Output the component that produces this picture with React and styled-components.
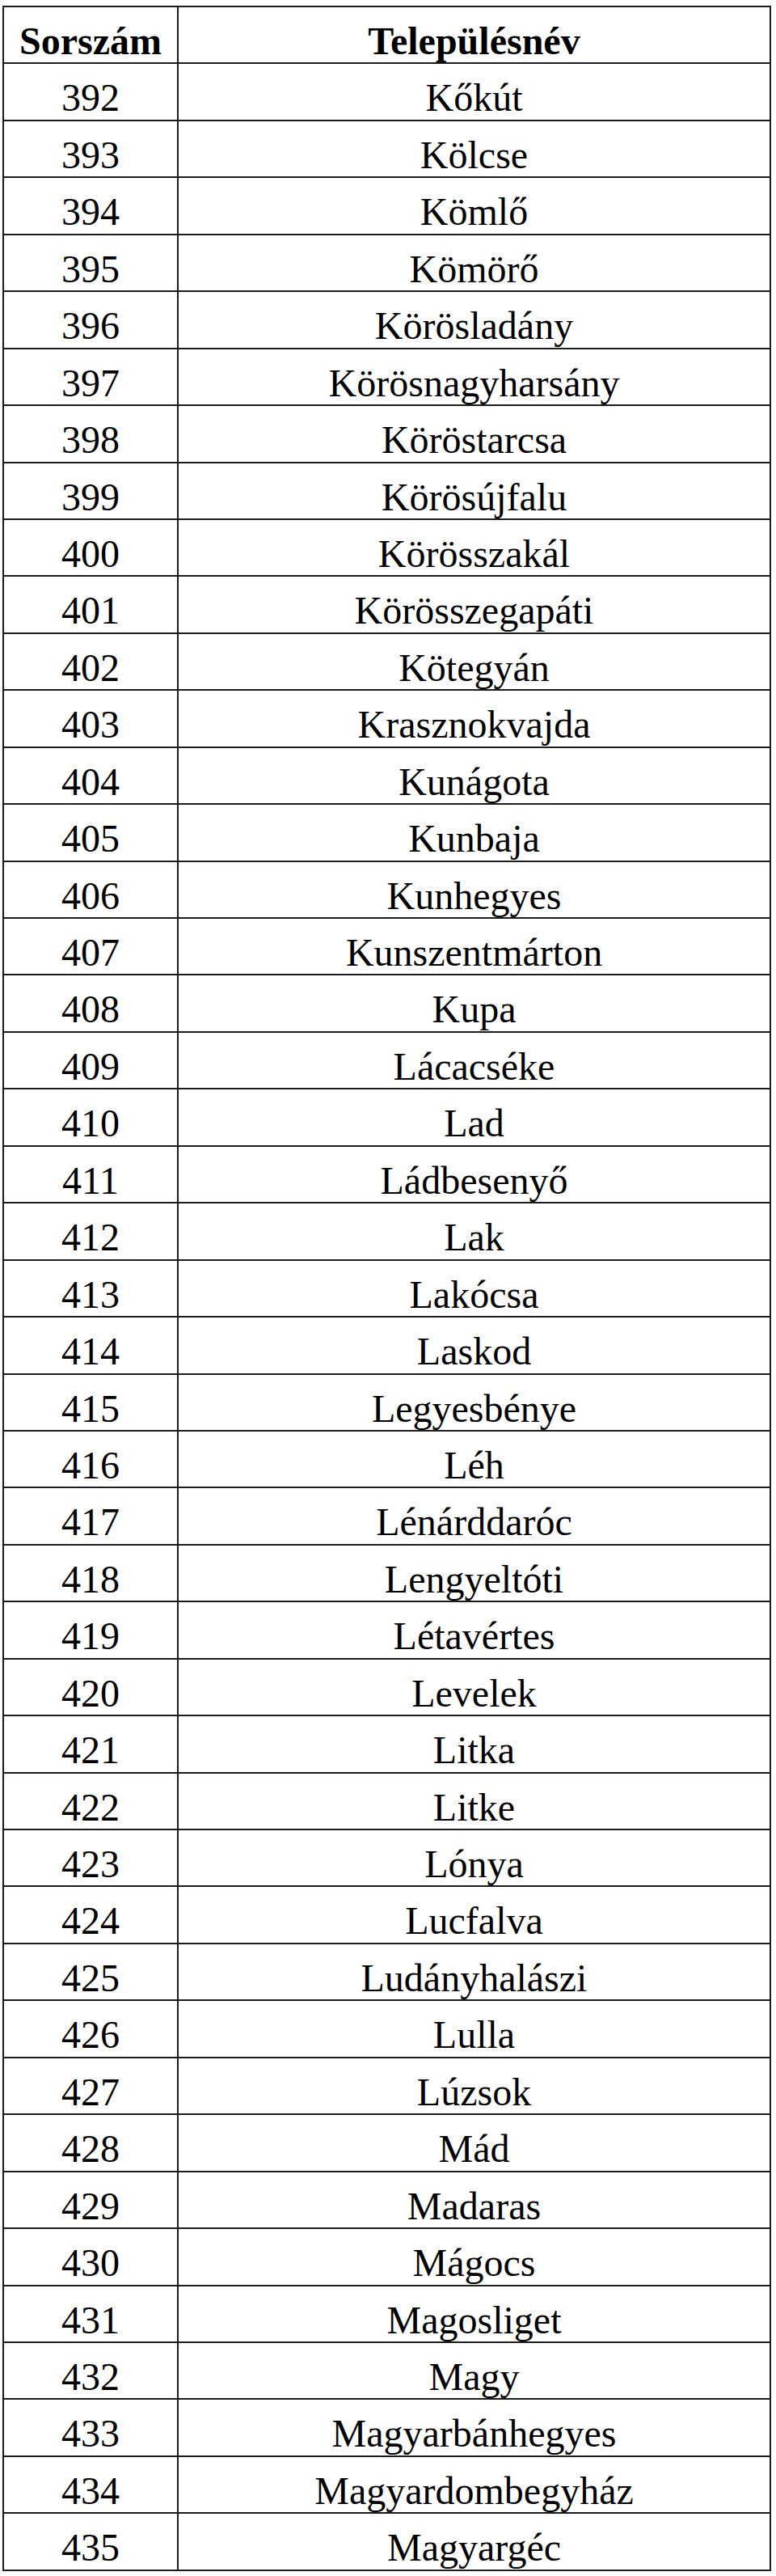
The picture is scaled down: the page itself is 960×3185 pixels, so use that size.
import React from 'react'
import styled, { createGlobalStyle } from 'styled-components'

const rows = [
  [392, 'Kőkút'],
  [393, 'Kölcse'],
  [394, 'Kömlő'],
  [395, 'Kömörő'],
  [396, 'Körösladány'],
  [397, 'Körösnagyharsány'],
  [398, 'Köröstarcsa'],
  [399, 'Körösújfalu'],
  [400, 'Körösszakál'],
  [401, 'Körösszegapáti'],
  [402, 'Kötegyán'],
  [403, 'Krasznokvajda'],
  [404, 'Kunágota'],
  [405, 'Kunbaja'],
  [406, 'Kunhegyes'],
  [407, 'Kunszentmárton'],
  [408, 'Kupa'],
  [409, 'Lácacséke'],
  [410, 'Lad'],
  [411, 'Ládbesenyő'],
  [412, 'Lak'],
  [413, 'Lakócsa'],
  [414, 'Laskod'],
  [415, 'Legyesbénye'],
  [416, 'Léh'],
  [417, 'Lénárddaróc'],
  [418, 'Lengyeltóti'],
  [419, 'Létavértes'],
  [420, 'Levelek'],
  [421, 'Litka'],
  [422, 'Litke'],
  [423, 'Lónya'],
  [424, 'Lucfalva'],
  [425, 'Ludányhalászi'],
  [426, 'Lulla'],
  [427, 'Lúzsok'],
  [428, 'Mád'],
  [429, 'Madaras'],
  [430, 'Mágocs'],
  [431, 'Magosliget'],
  [432, 'Magy'],
  [433, 'Magyarbánhegyes'],
  [434, 'Magyardombegyház'],
  [435, 'Magyargéc'],
]

export default function App() {
  return (
    <>
      <GlobalStyle />
      <Page>
        <Table>
          <Row>
            <Cell $bold $first>Sorszám</Cell>
            <Cell $bold>Településnév</Cell>
          </Row>
          {rows.map(([num, name]) => (
            <Row key={num}>
              <Cell $first>{num}</Cell>
              <Cell>{name}</Cell>
            </Row>
          ))}
        </Table>
      </Page>
    </>
  )
}

const GlobalStyle = createGlobalStyle`
  html, body {
    margin: 0;
    padding: 0;
    background: #ffffff;
  }
`

const Page = styled.div`
  padding: 7px 0 0 3px;
  width: 960px;
  box-sizing: border-box;
`

const Table = styled.div`
  width: 951px;
  box-sizing: border-box;
  border-top: 2px solid #1c1c1c;
  border-left: 2px solid #1c1c1c;
  border-right: 2px solid #1c1c1c;
  display: flex;
  flex-direction: column;
`

const Row = styled.div`
  display: grid;
  grid-template-columns: 216px 1fr;
  height: 70.44px;
  box-sizing: border-box;
  border-bottom: 2px solid #1c1c1c;
`

const Cell = styled.div`
  display: flex;
  justify-content: center;
  align-items: flex-start;
  padding-top: 18px;
  box-sizing: border-box;
  font-family: "Liberation Serif", "Times New Roman", serif;
  font-size: 48px;
  line-height: 48px;
  color: #000;
  font-weight: ${({ $bold }) => ($bold ? 700 : 400)};
  border-right: ${({ $first }) => ($first ? '2px solid #1c1c1c' : 'none')};
  white-space: nowrap;
`
